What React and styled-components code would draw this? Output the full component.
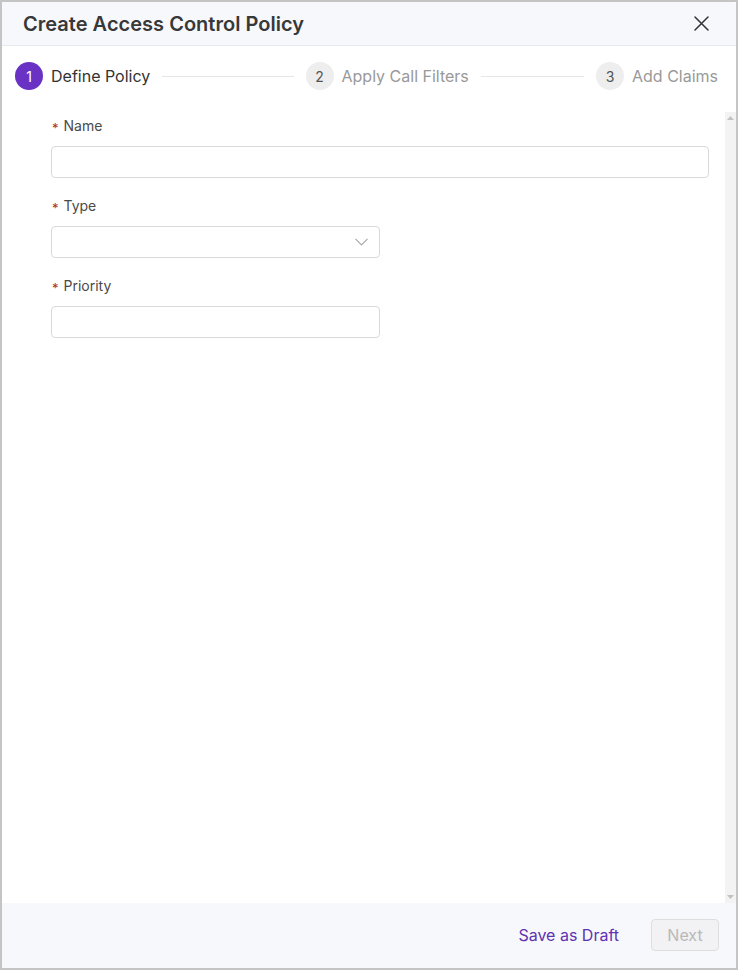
import React from 'react'
import styled, { createGlobalStyle } from 'styled-components'

const GlobalStyle = createGlobalStyle`
  html, body { margin: 0; padding: 0; }
  body {
    font-family: Inter, "Noto Sans", "Liberation Sans", sans-serif;
    color: #333;
    background: #fff;
  }
  * { box-sizing: border-box; }
`

const Frame = styled.div`
  width: 738px;
  height: 970px;
  border: 2px solid #c4c4c4;
  background: #fff;
  display: flex;
  flex-direction: column;
  overflow: hidden;
`

const Header = styled.header`
  height: 44px;
  flex: none;
  display: flex;
  align-items: center;
  justify-content: space-between;
  padding: 0 27px 0 21px;
  background: #f7f8fc;
  border-bottom: 1px solid #e7e9f0;
  border-top-right-radius: 4px;
`

const Title = styled.h1`
  margin: 0;
  font-size: 20px;
  font-weight: 600;
  color: #383838;
  letter-spacing: 0.02px;
`

const CloseButton = styled.button`
  border: 0;
  background: none;
  padding: 0;
  width: 16px;
  height: 16px;
  display: flex;
  align-items: center;
  justify-content: center;
  color: #333;
  cursor: pointer;
`

const Stepper = styled.div`
  flex: none;
  height: 66px;
  display: flex;
  align-items: flex-start;
  padding: 16px 18px 0 13px;
`

const Step = styled.div`
  display: flex;
  align-items: center;
  gap: 8px;
  flex: ${p => (p.$last ? 'none' : '1')};
`

const StepDot = styled.span`
  width: 28px;
  height: 28px;
  flex: none;
  border-radius: 50%;
  display: flex;
  align-items: center;
  justify-content: center;
  font-size: 14px;
  background: ${p => (p.$active ? '#6a31c5' : '#eeeeee')};
  color: ${p => (p.$active ? '#fff' : '#555')};
`

const StepLabel = styled.span`
  font-size: 16px;
  white-space: nowrap;
  color: ${p => (p.$active ? '#333' : '#999')};
`

const StepLine = styled.div`
  flex: 1;
  height: 1px;
  background: #e6e6e6;
  margin: 0 12px 0 4px;
`

const Body = styled.div`
  flex: 1;
  display: flex;
  min-height: 0;
`

const Content = styled.div`
  flex: 1;
  overflow: hidden;
  padding: 4px 16px 0 49px;
`

const ScrollRail = styled.div`
  width: 11px;
  flex: none;
  background: #f3f3f3;
  display: flex;
  flex-direction: column;
  justify-content: space-between;
  align-items: center;
  padding: 4px 0;
  color: #c2c2c2;
`

const Field = styled.div`
  display: flex;
  flex-direction: column;
  gap: 10px;
  margin-bottom: 18px;
  width: ${p => p.$width || '100%'};
`

const Label = styled.label`
  font-size: 14px;
  line-height: 20px;
  color: #4a4a4a;
  display: flex;
  align-items: center;
  gap: 5px;
  padding-left: 1px;
`

const Required = styled.span`
  color: #a3322f;
  font-size: 13px;
  line-height: 1;
  position: relative;
  top: 2px;
`

const Input = styled.input`
  height: 32px;
  width: 100%;
  border: 1px solid #d9d9d9;
  border-radius: 4px;
  padding: 0 10px;
  font: inherit;
  font-size: 14px;
  outline: none;
  background: #fff;
`

const SelectBox = styled.div`
  height: 32px;
  width: 100%;
  border: 1px solid #d9d9d9;
  border-radius: 4px;
  display: flex;
  align-items: center;
  justify-content: flex-end;
  padding-right: 11px;
  background: #fff;
  color: #aaa;
`

const Footer = styled.footer`
  height: 65px;
  flex: none;
  background: #f7f8fc;
  display: flex;
  align-items: center;
  justify-content: flex-end;
  gap: 32px;
  padding: 0 17px 1px 0;
`

const LinkButton = styled.button`
  border: 0;
  background: none;
  font: inherit;
  font-size: 16px;
  color: #5f33b0;
  padding: 0;
  cursor: pointer;
`

const PrimaryButton = styled.button`
  height: 32px;
  width: 68px;
  border: 1px solid #dedede;
  border-radius: 4px;
  background: #f2f2f4;
  color: #b9b9b9;
  font: inherit;
  font-size: 16px;
  cursor: not-allowed;
`

const steps = ['Define Policy', 'Apply Call Filters', 'Add Claims']

export default function App() {
  return (
    <>
      <GlobalStyle />
      <Frame>
        <Header>
          <Title>Create Access Control Policy</Title>
          <CloseButton aria-label="Close">
            <svg width="15" height="15" viewBox="0 0 15 15" fill="none" stroke="currentColor" strokeWidth="1.5" strokeLinecap="round">
              <path d="M1 1l13 13M14 1L1 14" />
            </svg>
          </CloseButton>
        </Header>

        <Stepper>
          {steps.map((s, i) => (
            <Step key={s} $last={i === steps.length - 1}>
              <StepDot $active={i === 0}>{i + 1}</StepDot>
              <StepLabel $active={i === 0}>{s}</StepLabel>
              {i < steps.length - 1 && <StepLine />}
            </Step>
          ))}
        </Stepper>

        <Body>
          <Content>
            <Field>
              <Label><Required>*</Required>Name</Label>
              <Input />
            </Field>
            <Field $width="329px">
              <Label><Required>*</Required>Type</Label>
              <SelectBox>
                <svg width="13" height="8" viewBox="0 0 13 8" fill="none" stroke="currentColor" strokeWidth="1.2">
                  <path d="M0.5 0.8l6 6 6-6" />
                </svg>
              </SelectBox>
            </Field>
            <Field $width="329px">
              <Label><Required>*</Required>Priority</Label>
              <Input />
            </Field>
          </Content>
          <ScrollRail aria-hidden="true">
            <svg width="7" height="4" viewBox="0 0 7 4" fill="currentColor"><path d="M3.5 0L7 4H0z" /></svg>
            <svg width="7" height="4" viewBox="0 0 7 4" fill="currentColor"><path d="M0 0h7L3.5 4z" /></svg>
          </ScrollRail>
        </Body>

        <Footer>
          <LinkButton>Save as Draft</LinkButton>
          <PrimaryButton disabled>Next</PrimaryButton>
        </Footer>
      </Frame>
    </>
  )
}
